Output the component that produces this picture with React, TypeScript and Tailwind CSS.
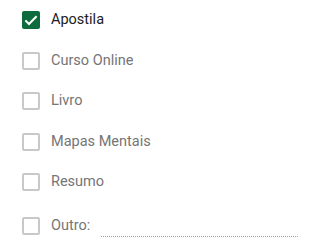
import React from 'react';

const options = ['Apostila', 'Curso Online', 'Livro', 'Mapas Mentais', 'Resumo'];

const Box = ({ checked }: { checked?: boolean }) =>
  checked ? (
    <span className="flex h-[18px] w-[18px] shrink-0 items-center justify-center rounded-[2px] bg-[#0d6b3d]">
      <svg viewBox="0 0 24 24" className="h-[18px] w-[18px]" fill="none" stroke="#fff" strokeWidth="2.8">
        <path d="M4.5 12.5l4.8 4.8L19.5 7" />
      </svg>
    </span>
  ) : (
    <span className="block h-[18px] w-[18px] shrink-0 rounded-[2px] border-2 border-[#c8c8c8]" />
  );

export default function App() {
  return (
    <div className="h-[252px] w-[299px] bg-white pl-[22px] pt-[11px] font-['Roboto',sans-serif] text-[14.5px]">
      <div className="flex flex-col gap-[22.5px]">
        {options.map((o, i) => (
          <label key={o} className="flex h-[18px] items-center gap-[11px]">
            <Box checked={i === 0} />
            <span className={i === 0 ? 'text-[#202124]' : 'text-[#757575]'}>{o}</span>
          </label>
        ))}
      </div>
      <div className="mt-[26px] flex h-[18px] items-center gap-[11px]">
        <Box />
        <span className="text-[#757575]">Outro:</span>
        <span className="mt-[20px] h-0 w-[197px] border-b border-dotted border-[#9aa0a6]" />
      </div>
    </div>
  );
}
